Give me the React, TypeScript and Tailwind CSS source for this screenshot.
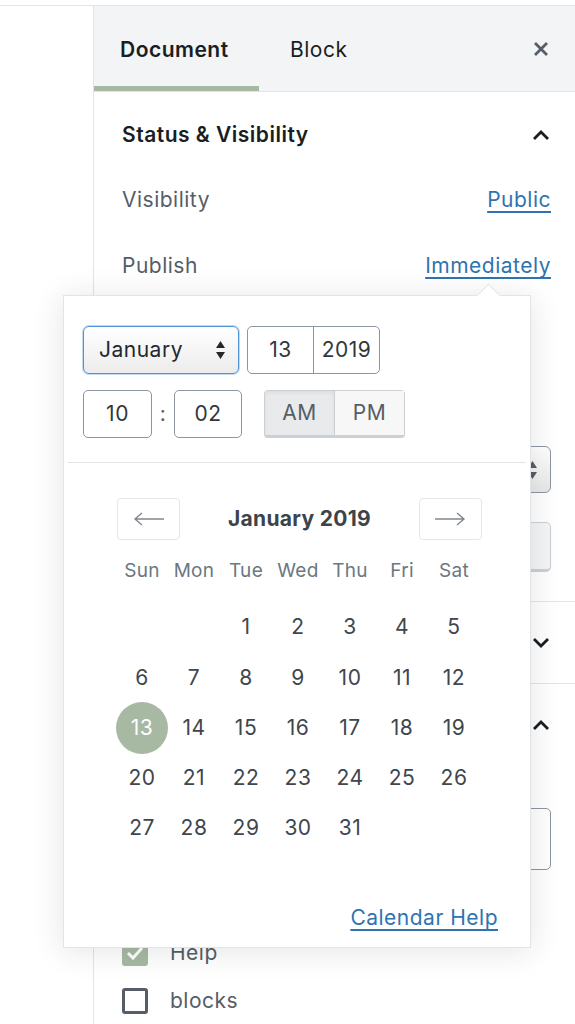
import React from "react";

const days: (number | null)[][] = [
  [null, null, 1, 2, 3, 4, 5],
  [6, 7, 8, 9, 10, 11, 12],
  [13, 14, 15, 16, 17, 18, 19],
  [20, 21, 22, 23, 24, 25, 26],
  [27, 28, 29, 30, 31, null, null],
];

const weekdays = ["Sun", "Mon", "Tue", "Wed", "Thu", "Fri", "Sat"];

const Chevron = ({ up }: { up?: boolean }) => (
  <svg width="20" height="12" viewBox="0 0 20 12" className="text-[#191e23]">
    <polyline
      points={up ? "3,10 10,3 17,10" : "3,2 10,9 17,2"}
      fill="none"
      stroke="currentColor"
      strokeWidth="2.8"
    />
  </svg>
);

const ArrowIcon = ({ right }: { right?: boolean }) => (
  <svg width="32" height="14" viewBox="0 0 32 14" className="text-[#82878c]">
    {right ? (
      <path d="M1 7 H30 M23 1 L30 7 L23 13" fill="none" stroke="currentColor" strokeWidth="1.4" />
    ) : (
      <path d="M31 7 H2 M9 1 L2 7 L9 13" fill="none" stroke="currentColor" strokeWidth="1.4" />
    )}
  </svg>
);

const Popover = () => (
  <div className="absolute left-[63px] top-[295px] h-[653px] w-[468px] border border-[#e2e4e7] bg-white shadow-[0_3px_30px_rgba(25,30,35,0.12)]">
    <div className="absolute left-[416px] top-[-9px] h-[17px] w-[17px] rotate-45 border-l border-t border-[#e2e4e7] bg-white" />
    <div className="relative px-[19px] pt-[30px]">
      <div className="flex gap-[8px]">
        <div className="flex h-[48px] w-[156px] items-center justify-between rounded-[6px] border border-[#4f94d4] bg-gradient-to-b from-white to-[#ececec] pl-[15px] pr-[12px] text-[21px] text-[#23282d] shadow-[0_0_0_1px_rgba(79,148,212,0.35)]">
          <span>January</span>
          <svg width="11" height="20" viewBox="0 0 11 20">
            <path d="M5.5 1 L10 8 H1 Z M5.5 19 L10 12 H1 Z" fill="#23282d" />
          </svg>
        </div>
        <div className="flex h-[48px] w-[133px] rounded-[5px] border border-[#8d96a0] text-[21px] text-[#32373c]">
          <div className="flex w-[66px] items-center justify-center border-r border-[#8d96a0]">13</div>
          <div className="flex flex-1 items-center justify-center">2019</div>
        </div>
      </div>
      <div className="mt-[16px] flex items-center text-[21px] text-[#32373c]">
        <div className="flex h-[48px] w-[69px] items-center justify-center rounded-[5px] border border-[#8d96a0]">10</div>
        <span className="w-[22px] text-center text-[#555d66]">:</span>
        <div className="flex h-[48px] w-[68px] items-center justify-center rounded-[5px] border border-[#8d96a0]">02</div>
        <div className="ml-[22px] flex h-[48px] w-[141px] rounded-[4px] border border-[#ccd0d4] border-b-[3px]">
          <div className="flex w-[70px] items-center justify-center border-r border-[#ccd0d4] bg-[#e9eaec] text-[#555d66] shadow-[inset_0_2px_4px_rgba(0,0,0,0.06)]">AM</div>
          <div className="flex flex-1 items-center justify-center bg-[#f7f7f7] text-[#555d66]">PM</div>
        </div>
      </div>
    </div>
    <div className="mx-[4px] mt-[24px] border-t border-[#e2e4e7]" />
    <div className="pl-[53px] pt-[35px]">
      <div className="mr-[48px] flex h-[42px] items-center justify-between">
        <div className="flex h-[42px] w-[63px] items-center justify-center rounded-[4px] border border-[#e4e7e7]">
          <ArrowIcon />
        </div>
        <span className="text-[21px] font-bold tracking-[0.3px] text-[#3c434a]">January 2019</span>
        <div className="flex h-[42px] w-[63px] items-center justify-center rounded-[4px] border border-[#e4e7e7]">
          <ArrowIcon right />
        </div>
      </div>
      <div className="ml-[-1px] mt-[16px] grid w-[364px] grid-cols-7 text-[19px] tracking-[0.3px] text-[#6c7781]">
        {weekdays.map((d) => (
          <div key={d} className="flex h-[30px] items-center justify-center">
            {d}
          </div>
        ))}
      </div>
      <div className="ml-[-1px] mt-[16px] grid w-[364px] grid-cols-7 text-[21px] text-[#40464d]">
        {days.flat().map((d, i) => (
          <div key={i} className="flex h-[50.25px] items-center justify-center">
            {d === 13 ? (
              <span className="flex h-[52px] w-[52px] items-center justify-center rounded-full bg-[#a7b9a3] text-white">13</span>
            ) : (
              d
            )}
          </div>
        ))}
      </div>
    </div>
    <div className="absolute right-[32px] top-[606px] text-[21px] tracking-[0.5px] text-[#2f74b0] underline underline-offset-[4px]">
      Calendar Help
    </div>
  </div>
);

export default function App() {
  return (
    <div className="relative h-[1024px] w-[575px] overflow-hidden bg-white pt-[5px] font-['Inter','Liberation_Sans',sans-serif] tracking-[0.5px]">
      <div className="flex h-full border-t border-[#e2e4e7]">
        <div className="w-[93px] shrink-0 bg-white" />
        <div className="flex-1 border-l border-[#e2e4e7]">
          <div className="flex h-[86px] items-stretch border-b border-[#e2e4e7] bg-[#f3f4f5]">
            <div className="flex w-[165px] flex-col">
              <div className="flex flex-1 items-center pl-[26px] pt-[8px] text-[21px] font-semibold text-[#191e23]">Document</div>
              <div className="h-[5px] bg-[#a7b9a3]" />
            </div>
            <div className="flex items-center pl-[31px] pt-[3px] text-[21px] text-[#191e23]">Block</div>
            <div className="ml-auto flex items-center pr-[26px]">
              <svg width="16" height="16" viewBox="0 0 16 16">
                <path d="M2 2 L14 14 M14 2 L2 14" stroke="#555d66" strokeWidth="2.8" />
              </svg>
            </div>
          </div>
          <div className="pl-[28px] pr-[24px] pt-[2px]">
            <div className="flex h-[82px] items-center justify-between">
              <span className="text-[21px] font-semibold text-[#191e23]">Status &amp; Visibility</span>
              <Chevron up />
            </div>
            <div className="flex h-[48px] items-center justify-between text-[21px]">
              <span className="text-[#555d66]">Visibility</span>
              <span className="text-[#2f74b0] underline underline-offset-[4px]">Public</span>
            </div>
            <div className="mt-[18px] flex h-[48px] items-center justify-between text-[21px]">
              <span className="text-[#555d66]">Publish</span>
              <span className="text-[#2f74b0] underline underline-offset-[4px]">Immediately</span>
            </div>
            <div className="mt-[156px] flex h-[47px] items-center justify-end rounded-[6px] border border-[#8d96a0] bg-gradient-to-b from-white to-[#e8e8e8] pr-[12px]">
              <svg width="11" height="20" viewBox="0 0 11 20">
                <path d="M5.5 1 L10 8 H1 Z M5.5 19 L10 12 H1 Z" fill="#555d66" />
              </svg>
            </div>
            <div className="mt-[29px] flex justify-end">
              <div className="h-[50px] w-[180px] rounded-[5px] border border-[#ccd0d4] border-b-[3px] bg-[#f3f5f6]" />
            </div>
          </div>
          <div className="mt-[29px] flex h-[82px] items-center justify-end border-t border-[#e2e4e7] pr-[24px]">
            <Chevron />
          </div>
          <div className="flex h-[82px] items-center justify-end border-t border-[#e2e4e7] pr-[24px]">
            <Chevron up />
          </div>
          <div className="pl-[28px] pr-[24px]">
            <div className="mt-[43px] h-[62px] rounded-[5px] border border-[#8d96a0]" />
            <div className="mt-[70px] flex h-[26px] items-center gap-[22px]">
              <span className="flex h-[26px] w-[26px] items-center justify-center rounded-[3px] bg-[#a7b9a3]">
                <svg width="18" height="14" viewBox="0 0 18 14">
                  <path d="M2 7 L7 12 L16 2" fill="none" stroke="white" strokeWidth="3" />
                </svg>
              </span>
              <span className="text-[21px] text-[#555d66]">Help</span>
            </div>
            <div className="mt-[22px] flex h-[26px] items-center gap-[22px]">
              <span className="h-[26px] w-[26px] rounded-[3px] border-[3px] border-[#555d66]" />
              <span className="text-[21px] text-[#555d66]">blocks</span>
            </div>
          </div>
        </div>
      </div>
      <Popover />
    </div>
  );
}
